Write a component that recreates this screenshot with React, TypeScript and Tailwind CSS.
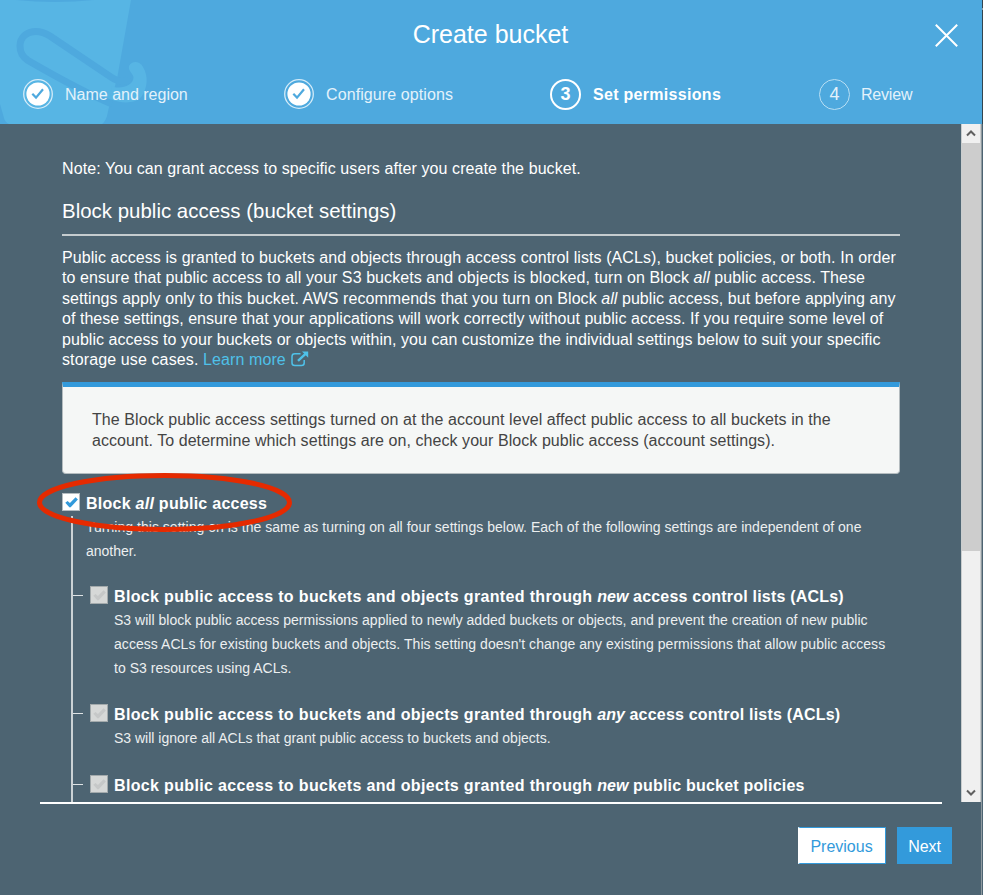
import React from "react";

const Check = ({ className = "" }: { className?: string }) => (
  <svg viewBox="0 0 13 11" className={className} fill="currentColor">
    <path d="M.3 5.800 2.600 3.900 4.900 5.900 10.600.2 12.900 2.500 5.900 9.900Q5 10.800 4.100 10Z" />
  </svg>
);

const Ln = ({ c = "", children }: { c?: string; children: React.ReactNode }) => (
  <span className={`block w-max whitespace-nowrap ${c}`}>{children}</span>
);

const DoneStep = ({ label, c = "" }: { label: string; c?: string }) => (
  <div className="flex items-center gap-[12px]">
    <svg viewBox="0 0 30 30" className="h-[30px] w-[30px]" fill="none">
      <circle cx="15" cy="15" r="14.3" stroke="#d3ebf8" strokeWidth="1.3" />
      <circle cx="15" cy="15" r="11.6" fill="#fff" />
      <path d="M9.300 14.800 13 18.600 20 10.200" stroke="#4ea9de" strokeWidth="2.200" />
    </svg>
    <Ln c={`pt-px text-[#e3f2fb] ${c}`}>{label}</Ln>
  </div>
);

const Box = ({ disabled }: { disabled?: boolean }) => (
  <span
    className={`flex h-[18px] w-[18px] shrink-0 items-center justify-center border ${
      disabled ? "border-[#a3aaac] bg-[#d6d8d7] text-[#c6c8c8]" : "border-[#b3bcc1] bg-white text-[#339adb]"
    }`}
  >
    <Check className="h-[11px] w-[13px]" />
  </span>
);

const OptionTitle = ({ word, rest }: { word: string; rest: string }) => (
  <Ln>
    <span className="tracking-[0.34px]">Block public access to buckets and objects granted through </span>
    <i className="tracking-normal">{word}</i>
    <span className="tracking-[0.2px]"> {rest}</span>
  </Ln>
);

const Option = ({ title, children }: { title: React.ReactNode; children?: React.ReactNode }) => (
  <div className="flex">
    <span className="mt-[9px] h-px w-[10px] bg-[#dfe4e6]" />
    <div className="ml-[7px]">
      <Box disabled />
    </div>
    <div className="ml-[6px]">
      <div className="mt-px text-[16px] leading-[20px] font-bold">{title}</div>
      <div className="mt-[2px] text-[14px] leading-[23.7px] text-[#eceff0]">{children}</div>
    </div>
  </div>
);

export default function App() {
  return (
    <div className="relative flex h-[895px] w-[983px] flex-col overflow-hidden bg-[#4d6472] font-['Liberation_Sans',Arial,sans-serif] text-[16px] text-white">
      <header className="relative h-[124px] shrink-0 overflow-hidden bg-[#4ea9de]">
        <svg className="absolute top-0 left-0" width="160" height="124" viewBox="0 0 160 124" fill="none">
          <path d="M0 0H131L117 79L109 107L107 116Q105 122 102 124H9Q5 122 4 118L0 104Z" fill="#57b5e4" />
          <path d="M16 0Q55 4 94 0Z" fill="#4ea9de" />
          <path
            d="M112 104C90 95 60 79 28 60.500C21 56 20 50 20 46C20 37 27 31.500 36 31.500C42 31.500 45 33 50 36L108 75C117 82 126 84 129 78"
            stroke="#4ea9de"
            strokeWidth="7"
          />
          <path
            d="M112 86C119 90 134 86 133.500 77C132 72 128 71 129 66C132 60 140 61 143 67C149 77 147 88 142 96C136 104 122 104 110 99Z"
            fill="#57b5e4"
          />
        </svg>
        <div className="relative flex h-[68px] items-center justify-center">
          <Ln c="mr-[2px] text-[25px] leading-[30px]">Create bucket</Ln>
        </div>
        <svg className="absolute top-[24px] left-[935px]" width="23" height="23" viewBox="0 0 23 23" stroke="#fff" strokeWidth="2">
          <path d="M.8.8 22.200 22.200M22.200.8.8 22.200" />
        </svg>
        <div className="relative mt-[2px] ml-[23px] flex h-[48px] items-center">
          <div className="w-[261px]">
            <DoneStep label="Name and region" />
          </div>
          <div className="w-[266px]">
            <DoneStep label="Configure options" c="tracking-[0.1px]" />
          </div>
          <div className="flex w-[269px] items-center gap-[12px] font-bold">
            <span className="flex h-[31px] w-[31px] items-center justify-center rounded-full border-2 border-white pt-px text-[18px]">3</span>
            <Ln c="pt-px tracking-[0.3px]">Set permissions</Ln>
          </div>
          <div className="flex items-center gap-[11px] text-[#e3f2fb]">
            <span className="flex h-[31px] w-[31px] items-center justify-center rounded-full border border-[#b8dff4] pt-px text-[18px]">4</span>
            <Ln c="pt-px tracking-[-0.2px]">Review</Ln>
          </div>
        </div>
      </header>

      <main className="flex h-[678px] shrink-0">
        <div className="h-full w-[961px] overflow-hidden pl-[62px]">
          <div className="mt-[35px] leading-[20px]">
            <Ln c="tracking-[0.09px]">Note: You can grant access to specific users after you create the bucket.</Ln>
          </div>
          <h2 className="mt-[19px] h-[38px] w-[838px] border-b-2 border-[#c5cccf] text-[20.400px] leading-[26px]">
            <Ln c="tracking-[0.03px]">Block public access (bucket settings)</Ln>
          </h2>
          <div className="mt-[12px] leading-[20.400px]">
            <Ln c="tracking-[0.08px]">
              Public access is granted to buckets and objects through access control lists (ACLs), bucket policies, or both. In order
            </Ln>
            <Ln c="tracking-[0.08px]">
              to ensure that public access to all your S3 buckets and objects is blocked, turn on Block <i>all</i> public access. These
            </Ln>
            <Ln c="tracking-[0.06px]">
              settings apply only to this bucket. AWS recommends that you turn on Block <i>all</i> public access, but before applying any
            </Ln>
            <Ln c="tracking-[0.04px]">
              of these settings, ensure that your applications will work correctly without public access. If you require some level of
            </Ln>
            <Ln c="tracking-[0.04px]">
              public access to your buckets or objects within, you can customize the individual settings below to suit your specific
            </Ln>
            <div className="flex">
              <Ln c="tracking-[0.12px]">storage use cases.&nbsp;</Ln>
              <Ln c="tracking-[0.1px] text-[#4fc1e9]">Learn more</Ln>
              <svg className="mt-px ml-[5px]" width="18" height="16" viewBox="0 0 18 16" fill="none" stroke="#4fc1e9" strokeWidth="1.5">
                <path d="M9.500 2.800H3.800Q1 2.800 1 5.500V12Q1 14.500 3.800 14.500H10.500Q13.200 14.500 13.200 12V9" />
                <path d="M7 9.800 14.500 2.800" strokeWidth="2.400" />
                <path d="M11 .5H17.200V6.700Z" fill="#4fc1e9" stroke="none" />
              </svg>
            </div>
          </div>
          <div className="mt-[12px] h-[92px] w-[838px] rounded-b border border-t-[5px] border-[#b4bcbf] border-t-[#339adb] bg-[#f5f7f6] pt-[23px] pl-[29px] leading-[20.400px] text-[#444]">
            <Ln c="tracking-[0.075px]">The Block public access settings turned on at the account level affect public access to all buckets in the</Ln>
            <Ln c="tracking-[0.06px]">account. To determine which settings are on, check your Block public access (account settings).</Ln>
          </div>
          <div className="mt-[19px] flex h-[24px]">
            <Box />
            <div className="ml-[6px] pt-px leading-[20px] font-bold">
              <Ln c="tracking-[0.26px]">
                Block <i>all</i> public access
              </Ln>
            </div>
          </div>
          <div className="ml-[9px] h-[300px] border-l-2 border-[#cbd2d5]">
            <div className="-mt-px ml-[13px] h-[70px] text-[14px] leading-[23.700px] text-[#eceff0]">
              <Ln c="tracking-[0.025px]">
                Turning this setting on is the same as turning on all four settings below. Each of the following settings are independent of one
              </Ln>
              <Ln>another.</Ln>
            </div>
            <div className="h-[118px]">
              <Option title={<OptionTitle word="new" rest="access control lists (ACLs)" />}>
                <Ln c="tracking-[0.015px]">
                  S3 will block public access permissions applied to newly added buckets or objects, and prevent the creation of new public
                </Ln>
                <Ln c="tracking-[0.05px]">
                  access ACLs for existing buckets and objects. This setting doesn't change any existing permissions that allow public access
                </Ln>
                <Ln c="tracking-[0.03px]">to S3 resources using ACLs.</Ln>
              </Option>
            </div>
            <div className="h-[71px]">
              <Option title={<OptionTitle word="any" rest="access control lists (ACLs)" />}>
                <Ln>S3 will ignore all ACLs that grant public access to buckets and objects.</Ln>
              </Option>
            </div>
            <Option title={<OptionTitle word="new" rest="public bucket policies" />} />
          </div>
        </div>
        <div className="flex h-full w-[20px] flex-col border-x border-[#c9cdce] bg-[#f0f0f0]">
          <div className="flex h-[19px] items-center justify-center">
            <svg width="10" height="7" viewBox="0 0 10 7" fill="none" stroke="#606060" strokeWidth="2">
              <path d="M1 5.500 5 1.500 9 5.500" />
            </svg>
          </div>
          <div className="h-[408px] bg-[#cdcdcd]" />
          <div className="grow" />
          <div className="flex h-[20px] items-center justify-center">
            <svg width="10" height="7" viewBox="0 0 10 7" fill="none" stroke="#606060" strokeWidth="2">
              <path d="M1 1.500 5 5.500 9 1.500" />
            </svg>
          </div>
        </div>
      </main>

      <footer className="grow">
        <div className="ml-[40px] h-[2px] w-[902px] bg-white" />
        <div className="mt-[23px] flex pl-[798px]">
          <div className="flex h-[37px] w-[88px] items-center justify-center border border-l-2 border-[#339adb] border-l-white bg-white pt-[2px] text-[#339adb]">
            <Ln c="mr-[2px]">Previous</Ln>
          </div>
          <div className="ml-[11px] flex h-[37px] w-[55px] items-center justify-center bg-[#339adb] pt-[2px]">
            <Ln c="tracking-[-0.1px]">Next</Ln>
          </div>
        </div>
      </footer>

      <div className="absolute top-[124px] right-0 bottom-0 w-[2px] border-l border-[#8f9aa0] bg-[#4d6472]" />
      <div className="absolute top-0 right-0 h-[124px] w-px bg-[#34454f]" />
      <div className="absolute top-[8px] right-0 h-[2px] w-px bg-[#8f9aa0]" />
      <svg className="absolute top-[470px] left-[34px]" width="262" height="64" viewBox="0 0 262 64" fill="none">
        <ellipse cx="130.500" cy="32.400" rx="125" ry="27" stroke="#e52a00" strokeWidth="5" />
      </svg>
    </div>
  );
}
